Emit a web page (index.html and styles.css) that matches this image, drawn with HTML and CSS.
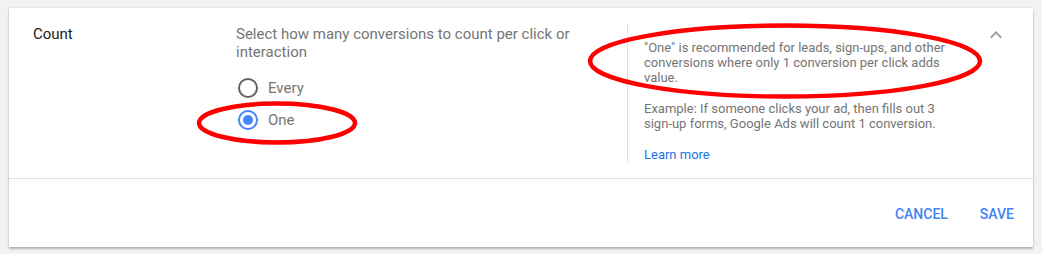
FILE: index.html
```html
<!DOCTYPE html>
<html lang="en">
<head>
    <meta charset="UTF-8">
    <title>Conversion settings - Count</title>
    <link rel="stylesheet" href="styles.css">
</head>
<body>
    <div class="card">
        <div class="setting-row">
            <div class="setting-label">Count</div>
            <div class="setting-body">
                <p class="question">Select how many conversions to count per click or interaction</p>
                <div class="radio-group">
                    <label class="radio"><span class="radio-circle"></span>Every</label>
                    <label class="radio checked"><span class="radio-circle"></span>One</label>
                </div>
            </div>
            <div class="setting-help">
                <p>"One" is recommended for leads, sign-ups, and other conversions where only 1 conversion per click adds value.</p>
                <p>Example: If someone clicks your ad, then fills out 3 sign-up forms, Google Ads will count 1 conversion.</p>
                <a class="learn-more" href="#">Learn more</a>
            </div>
            <svg class="collapse-icon" width="24" height="24" viewBox="0 0 24 24">
                <path d="M12 8l-6 6 1.41 1.41L12 10.83l4.59 4.58L18 14z"/>
            </svg>
        </div>
        <div class="card-actions">
            <button class="text-btn">Cancel</button>
            <button class="text-btn">Save</button>
        </div>
    </div>

    <!-- red annotation marks drawn over the screenshot -->
    <svg class="annotations" width="1042" height="254">
        <ellipse cx="277" cy="123" rx="78" ry="19.5"/>
        <ellipse cx="785" cy="61" rx="195" ry="35.5"/>
    </svg>
</body>
</html>
```

FILE: styles.css
```css
:root {
    --page-bg: #f2f2f2;
    --card-bg: #ffffff;
    --divider: #e0e0e0;
    --text-dark: #212121;
    --text-muted: #757575;
    --radio-grey: #616161;
    --blue: #4285f4;
    --link-blue: #1a73e8;
}
body {
    font-family: Roboto, "Liberation Sans", Arial, sans-serif;
    background-color: var(--page-bg);
    margin: 0;
    padding: 8px 9px;
    position: relative;
}
.card {
    width: 1024px;
    background-color: var(--card-bg);
    box-shadow: 0 2px 2px rgba(0, 0, 0, 0.24), 0 0 2px rgba(0, 0, 0, 0.12);
}
.setting-row {
    display: flex;
    align-items: flex-start;
    padding: 16px 25px 16px 24px;
    border-bottom: 1px solid var(--divider);
    height: 138px;
}
.setting-label {
    width: 203px;
    flex-shrink: 0;
    font-size: 15px;
    line-height: 20px;
    color: var(--text-dark);
}
.setting-body { width: 391px; flex-shrink: 0; padding-top: 1px; }
.question {
    margin: 0;
    width: 360px;
    font-size: 15px;
    line-height: 18px;
    color: var(--text-muted);
}
.radio-group { margin-top: 11px; display: flex; flex-direction: column; }
.radio {
    display: flex;
    align-items: center;
    height: 32px;
    font-size: 15px;
    color: var(--text-muted);
}
.radio-circle {
    width: 16px;
    height: 16px;
    margin: 0 10px 0 2px;
    border: 2px solid var(--radio-grey);
    border-radius: 50%;
    display: flex;
    align-items: center;
    justify-content: center;
}
.radio.checked .radio-circle { border-color: var(--blue); }
.radio.checked .radio-circle::after {
    content: "";
    width: 10px;
    height: 10px;
    border-radius: 50%;
    background-color: var(--blue);
}
.setting-help {
    width: 305px;
    height: 122px;
    padding: 16px 0 0 16px;
    border-left: 1px solid var(--divider);
    font-size: 13px;
    line-height: 15px;
    color: var(--text-muted);
}
.setting-help p { margin: 0 0 16px; }
.learn-more { color: var(--link-blue); text-decoration: none; }
.collapse-icon { margin: -1px 0 0 auto; fill: #9e9e9e; flex-shrink: 0; }
.card-actions {
    display: flex;
    justify-content: flex-end;
    align-items: center;
    gap: 16px;
    height: 68px;
    padding-right: 11px;
}
.text-btn {
    border: none;
    background: none;
    padding: 0 8px;
    font-family: inherit;
    font-size: 14px;
    font-weight: 500;
    text-transform: uppercase;
    color: var(--blue);
    margin-top: 2px;
}
.annotations {
    position: absolute;
    left: 0;
    top: 0;
    pointer-events: none;
}
.annotations ellipse { fill: none; stroke: #f00; stroke-width: 4.5; }
```
